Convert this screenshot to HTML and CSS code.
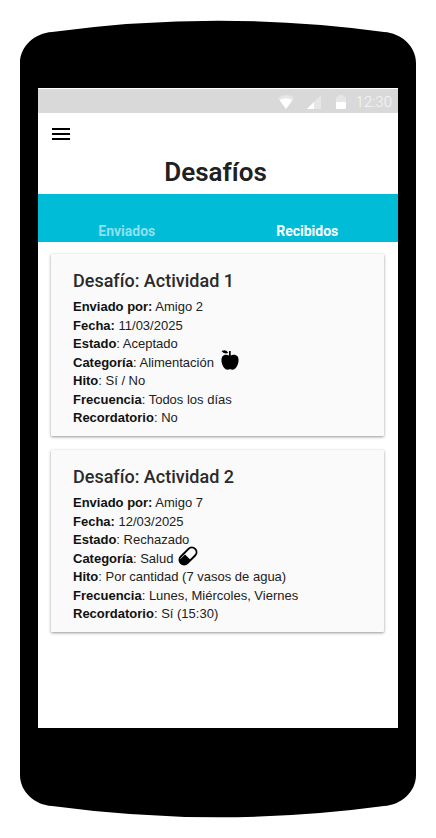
FILE: index.html
```html
<!DOCTYPE html>
<html lang="es">
<head>
<meta charset="utf-8">
<title>Desafíos</title>
<link rel="stylesheet" href="styles.css">
</head>
<body>
<div class="phone">
  <svg class="shell" width="436" height="838" viewBox="0 0 436 838" aria-hidden="true"><path d="M20 63C20 46 35 33 52 32Q218 9.500 384 32C401 33 416 46 416 63V775C416 792 401 805 384 806Q218 828.500 52 806C35 805 20 792 20 775Z"/></svg>
  <main class="screen">
    <div class="status">
      <svg class="wifi" width="16" height="14" viewBox="0 0 16 14"><path fill="#e6e6e6" d="M0 3Q8-3 16 3L8 14Z"/><path fill="#fff" d="M1.500 5Q8 1.500 14.500 5L8 14Z"/></svg>
      <svg class="signal" width="14" height="14" viewBox="0 0 14 14"><path fill="#e6e6e6" d="M14 0V14H0Z"/><path fill="#fff" d="M7 7V14H0Z"/></svg>
      <svg class="battery" width="10" height="14" viewBox="0 0 10 14"><path fill="#e6e6e6" d="M0 3Q0 1.500 2 1.500Q2.500 0 4 0H6Q7.500 0 8 1.500Q10 1.500 10 3V8H0Z"/><path fill="#fff" d="M0 7H10V13Q10 14 9 14H1Q0 14 0 13Z"/></svg>
      <span class="clock">12:30</span>
    </div>
    <header class="bar">
      <svg class="menu" width="18" height="12" viewBox="0 0 18 12"><path d="M0 0H18V2H0ZM0 5H18V7H0ZM0 10H18V12H0Z"/></svg>
      <h1>Desafíos</h1>
    </header>
    <nav class="tabs"><span class="tab">Enviados</span><span class="tab active">Recibidos</span></nav>
    <section class="cards">
      <article class="card">
        <h2>Desafío: Actividad 1</h2>
        <p><b>Enviado por:</b> Amigo 2</p>
        <p><b>Fecha:</b> 11/03/2025</p>
        <p><b>Estado</b>: Aceptado</p>
        <p class="category"><span><b>Categoría</b>: Alimentación</span><svg class="apple" width="18" height="20" viewBox="0 0 18 20"><path d="M8 1H9.700V5.500C11.500 4.300 15 4.200 16.700 6.500C18.500 9.500 17.500 15.500 14 18.700C12.500 20 11 20 9.500 19.300H8.500C7 20 5.500 20 4 18.700C.5 15.500-.5 9.500 1.300 6.500C2.800 4.300 6 4.200 8 5.500Z"/><path d="M.5 1Q5.500-1 7.300 3Q2.500 4.500 .5 1Z"/></svg></p>
        <p><b>Hito</b>: Sí / No</p>
        <p><b>Frecuencia</b>: Todos los días</p>
        <p><b>Recordatorio</b>: No</p>
      </article>
      <article class="card">
        <h2>Desafío: Actividad 2</h2>
        <p><b>Enviado por:</b> Amigo 7</p>
        <p><b>Fecha:</b> 12/03/2025</p>
        <p><b>Estado</b>: Rechazado</p>
        <p class="category"><span><b>Categoría</b>: Salud</span><svg class="pill" width="20" height="20" viewBox="0 0 20 20"><g transform="rotate(-45 10 10)"><rect x="-.1" y="5.300" width="20.200" height="9.400" rx="4.700" fill="none" stroke="#000" stroke-width="1.900"/><path d="M9 6.800V14.700H4.600A4.700 4.700 0 0 1 -.1 10L.8 6.800Z"/></g></svg></p>
        <p><b>Hito</b>: Por cantidad (7 vasos de agua)</p>
        <p><b>Frecuencia</b>: Lunes, Miércoles, Viernes</p>
        <p><b>Recordatorio</b>: Sí (15:30)</p>
      </article>
    </section>
  </main>
</div>
</body>
</html>
```
FILE: styles.css
```css
* { box-sizing: border-box; }
body { margin: 0; background: #fff; }
h1, h2, p { margin: 0; }
svg { display: block; flex: none; }
.phone { display: grid; width: 436px; height: 838px; }
.shell, .screen { grid-area: 1 / 1; }
.screen { width: 360px; height: 640px; margin: 88px 0 0 38px; background: #fff; font-family: Roboto, sans-serif; }
.status { display: flex; align-items: center; height: 25px; padding: 1px 6px 0 0; border-top: 1px solid #fff; background: #d9d9d9; justify-content: flex-end; }
.signal { margin-left: 13px; }
.battery { margin-left: 15px; }
.clock { margin-left: 10px; font-size: 15px; font-weight: 300; line-height: 22px; color: #f7f7f7; }
.bar { height: 81px; padding-top: 15px; }
.menu { margin-left: 14px; }
h1 { margin: 16px 0 0 -5px; text-align: center; font-size: 26px; line-height: 32px; font-weight: 600; color: #212121; }
.tabs { display: grid; grid-template-columns: 1fr 1fr; height: 48px; padding: 27px 1px 0 0; background: #00bcd7; }
.tab { padding-right: 2px; text-align: center; font-size: 14px; line-height: 20px; font-weight: 700; color: #8fe0ec; }
.active { padding-right: 0; color: #fff; }
.cards { display: grid; gap: 14px; padding: 12px 14px 0 13px; }
.card { height: 182px; padding: 14px 0 0 22px; border-radius: 1px; background: #fafafa; box-shadow: 0 1px 3px rgba(0, 0, 0, .42); font: 13px/18.460px "Liberation Sans", Arial, sans-serif; color: #212121; }
.card h2 { margin-bottom: 4.250px; font: 500 18px/26px Roboto, sans-serif; color: #2a2a2a; }
.card p { height: 18.460px; white-space: nowrap; }
.card b { color: #111; }
.category { display: flex; gap: 6px; }
.apple, .pill { margin-top: -4px; }
.apple { margin-left: 1px; }
.pill { margin-left: -1px; }
```
